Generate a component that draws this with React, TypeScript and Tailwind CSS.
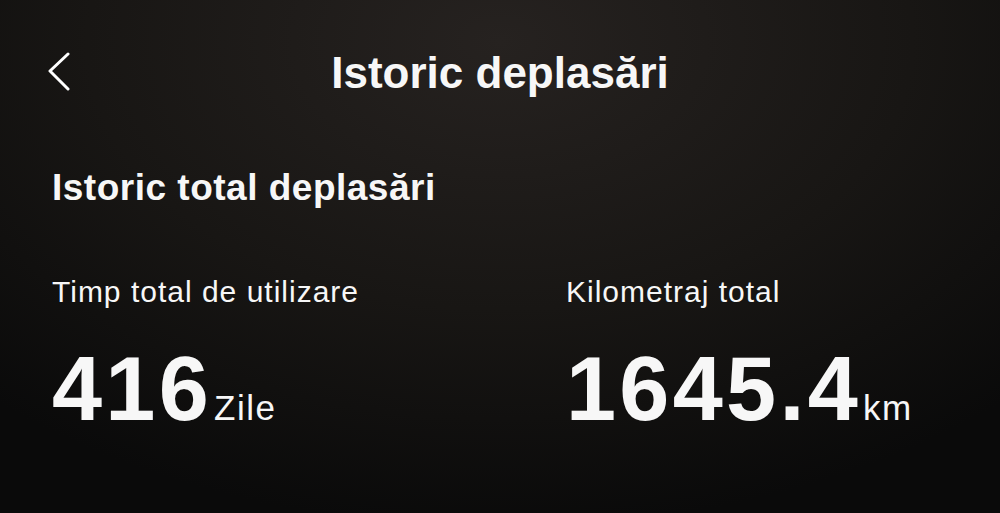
import React from 'react';

interface Stat {
  label: string;
  value: string;
  unit: string;
}

const stats: Stat[] = [
  { label: 'Timp total de utilizare', value: '416', unit: 'Zile' },
  { label: 'Kilometraj total', value: '1645.4', unit: 'km' },
];

const BackIcon = () => (
  <svg width="24" height="40" viewBox="0 0 24 40" fill="none" stroke="currentColor">
    <polyline points="20,2 2,19 20,37" strokeWidth={3} strokeLinecap="round" strokeLinejoin="round" />
  </svg>
);

export default function App() {
  return (
    <div
      className="w-[1000px] h-[513px] overflow-hidden text-[#f7f7f7] bg-[radial-gradient(ellipse_75%_95%_at_50%_8%,#262220_0%,#181614_55%,#0a0a0a_100%)]"
      style={{ fontFamily: '"Liberation Sans", Arial, sans-serif' }}
    >
      {/* Header */}
      <div className="relative flex items-center justify-center pt-[51px]">
        <button className="absolute left-[48px] top-[52px] text-white" aria-label="Înapoi">
          <BackIcon />
        </button>
        <h1 className="text-[44px] leading-none font-bold">Istoric deplasări</h1>
      </div>

      {/* Content */}
      <div className="pl-[52px]">
        <h2 className="mt-[74px] text-[37px] leading-none font-bold tracking-[0.5px]">Istoric total deplasări</h2>

        <div className="mt-[71px] grid grid-cols-[514px_1fr]">
          {stats.map((s) => (
            <div key={s.label} className="flex flex-col">
              <div className="text-[30px] leading-none tracking-[1px]">{s.label}</div>
              <div className="mt-[37px] flex items-baseline">
                <span className="text-[90px] leading-none font-bold tracking-[3.3px]">{s.value}</span>
                <span className="ml-[2px] text-[35px] leading-none tracking-[1.5px]">{s.unit}</span>
              </div>
            </div>
          ))}
        </div>
      </div>
    </div>
  );
}
